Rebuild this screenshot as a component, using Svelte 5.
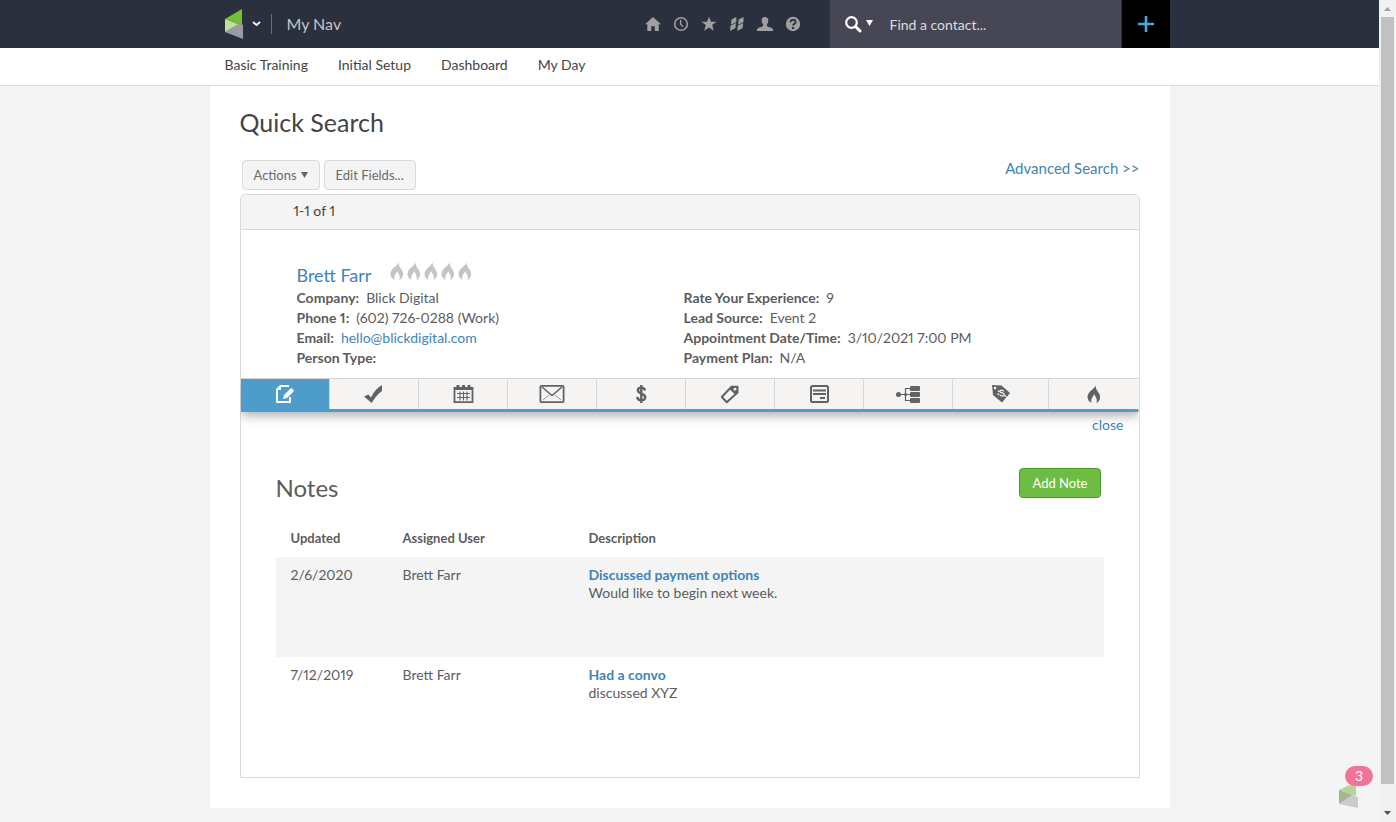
<script lang="ts">
  type Field = { label: string; value: string; href?: string };

  const links = ["Basic Training", "Initial Setup", "Dashboard", "My Day"];
  const quickIcons = ["home", "recent", "favorites", "campaigns", "users", "help"];

  const leftFields: Field[] = [
    { label: "Company:", value: "Blick Digital" },
    { label: "Phone 1:", value: "(602) 726-0288 (Work)" },
    { label: "Email:", value: "hello@blickdigital.com", href: "#email" },
    { label: "Person Type:", value: "" },
  ];

  const rightFields: Field[] = [
    { label: "Rate Your Experience:", value: "9" },
    { label: "Lead Source:", value: "Event 2" },
    { label: "Appointment Date/Time:", value: "3/10/2021 7:00 PM" },
    { label: "Payment Plan:", value: "N/A" },
  ];

  const tabs = [
    "notes", "tasks", "appointments", "email", "orders",
    "tags", "forms", "sequences", "pricing", "score",
  ];

  const notes = [
    { updated: "2/6/2020", user: "Brett Farr", title: "Discussed payment options", body: "Would like to begin next week." },
    { updated: "7/12/2019", user: "Brett Farr", title: "Had a convo", body: "discussed XYZ" },
  ];

  let activeTab = $state("notes");
  let query = $state("");
</script>

{#snippet flame()}
  <path d="M8.600 0C8 4 .8 6.200.5 11.600c-.1 3 1.500 5.200 4 6.400-1-3.700 1-6 3-8.800.8 2.800 3.400 4.600 1.900 8.800 2.400-1.200 3.800-3.400 3.700-6.300C13 7.500 8.200 5.500 8.600 0z" />
{/snippet}

{#snippet quickIcon(name: string)}
  <svg width="16" height="16" viewBox="0 0 16 16" fill="#a0a0a0" aria-hidden="true">
    {#if name === "home"}
      <path d="M8 1l8 7.300h-2.200V15H9.800v-4.800H6.300V15H2.300V8.300H0z" />
    {:else if name === "recent"}
      <circle cx="8" cy="8" r="6.300" fill="none" stroke="#a0a0a0" stroke-width="1.600" />
      <path d="M7.600 4v4.300l2.600 2.500" fill="none" stroke="#a0a0a0" stroke-width="1.400" />
    {:else if name === "favorites"}
      <path d="M8 .7l2 5h5.500l-4.300 3.400 1.600 5.700L8 11.500l-4.800 3.300 1.600-5.700L.5 5.700H6z" />
    {:else if name === "campaigns"}
      <path d="M2.500 3.500L7.300 1v5L2 8.800zM9.700 3.500L14.500 1v5L9.200 8.800zM1.600 9.800L6.900 7l-.5 5L1.100 15zM8.800 9.800L14.100 7l-.5 5-5.300 3z" />
    {:else if name === "users"}
      <path d="M8 1c2 0 3.300 1.300 3.300 3.400 0 1.800-.7 3-1.500 4v1.300c.6 1.300 4.800 1.600 6.200 3.300V15H0v-2c1.400-1.700 5.600-2 6.200-3.300V8.400c-.8-1-1.500-2.200-1.500-4C4.700 2.300 6 1 8 1z" />
    {:else}
      <circle cx="8" cy="8" r="7.200" />
      <path d="M5.400 6.200C5.500 3 10.600 3 10.600 6c0 1.700-2.500 1.700-2.500 3.600" fill="none" stroke="#2b303f" stroke-width="1.800" />
      <circle cx="8.100" cy="11.900" r="1.200" fill="#2b303f" />
    {/if}
  </svg>
{/snippet}

{#snippet tabIcon(name: string)}
  <svg width="26" height="20" viewBox="0 0 26 20" fill="#626262" aria-hidden="true">
    {#if name === "notes"}
      <path d="M17 2H8.500L5 5.500V18h13v-5" fill="none" stroke="#fff" stroke-width="2" />
      <path d="M4 6l5-5v5zM11 15l1-4 7.500-7.500 3 3L15 14z" fill="#fff" />
      <path d="M18 2.500l4.500 4.500" stroke="#4d9cc9" stroke-width=".8" />
    {:else if name === "tasks"}
      <path d="M3 12.600l4.500-2 2.500 3C12.500 8 16.500 3.400 21 1v6c-3.800 2.500-7.300 6.500-10.300 12z" />
    {:else if name === "appointments"}
      <path d="M4.500 4h18v14.200h-18z" fill="none" stroke="#626262" stroke-width="1.800" />
      <path d="M6.500 1h3v4h-3zM12 1h3v4h-3zM17.500 1h3v4h-3zM4 3h19v3H4z" />
      <path d="M7 9.500h13M7 13.500h13M10 7.500v9M13.500 7.500v9M17 7.500v9" stroke="#626262" stroke-width="1.100" />
    {:else if name === "email"}
      <rect x="1.400" y="1.900" width="23.200" height="16.200" rx="1" fill="none" stroke="#626262" stroke-width="1.800" />
      <path d="M3 3l10 8.500L23 3" fill="none" stroke="#626262" stroke-width="1.500" />
      <path d="M4 16l6-5M22 16l-6-5" stroke="#999" stroke-width="1" />
    {:else if name === "orders"}
      <path d="M17 6.500C16.500 2.800 9.800 2.600 9.800 6.300c0 4 7.500 2.600 7.500 7 0 4-7.600 4-8.100-.3M13.300 1v18" fill="none" stroke="#626262" stroke-width="2.400" />
    {:else if name === "tags"}
      <path d="M14.500 2.800L4.800 13l5 5.200L20.500 8.500V2.800z" fill="none" stroke="#626262" stroke-width="2" stroke-linejoin="round" />
      <path d="M14.500 2H21v7l-3 1.500-5-5z" />
      <circle cx="18" cy="5.200" r="1.400" fill="#f5f4f3" />
    {:else if name === "forms"}
      <rect x="5" y="2" width="17" height="16" rx="1.500" fill="none" stroke="#626262" stroke-width="2" />
      <path d="M7 6.500h13M7 10h13" stroke="#626262" stroke-width="1.800" />
      <path d="M14 14h5" stroke="#626262" stroke-width="2" />
    {:else if name === "sequences"}
      <circle cx="3.500" cy="10.500" r="2.500" />
      <circle cx="10.500" cy="10.500" r="1.500" />
      <path d="M3 10.500h13M16 4.500h-5.500v12H16" fill="none" stroke="#626262" stroke-width="1.200" />
      <rect x="15" y="2" width="10" height="5" rx="1" />
      <rect x="15" y="8" width="10" height="5" rx="1" />
      <rect x="15" y="14" width="10" height="5" rx="1" />
    {:else if name === "pricing"}
      <path d="M4 1l9.500.5L22 9l-8 9.500L5 11z" />
      <path d="M15.700 7.500c-1.300-2.200-4.300-1.200-3.500.5.700 1.400 3.300.4 3.900 2 .6 1.900-2.300 3-4 .9M10 6.500l1.500 1.300M16.600 11.400l1.600 1.400M9.500 9.500l1.700 1.500" fill="none" stroke="#f5f4f3" stroke-width="1.300" />
      <circle cx="7" cy="4" r="1.300" fill="#f5f4f3" />
    {:else}
      <g transform="translate(6 1)">{@render flame()}</g>
    {/if}
  </svg>
{/snippet}

{#snippet fieldList(fields: Field[])}
  <dl class="fields">
    {#each fields as field (field.label)}
      <div class="field">
        <dt>{field.label}</dt>
        <dd>
          {#if field.href}<a href={field.href}>{field.value}</a>{:else}{field.value}{/if}
        </dd>
      </div>
    {/each}
  </dl>
{/snippet}

<div class="window">
  <div class="page">
    <header class="topbar">
      <div class="wrap topbar-inner">
        <button type="button" class="brand" aria-label="Switch menu">
          <svg width="18" height="30" viewBox="0 0 18 30" aria-hidden="true">
            <path d="M0 10L17 0v16L0 10z" fill="#78be35" />
            <path d="M0 10l14 5.200L0 23z" fill="#c1e0a0" />
            <path d="M0 23l14-8.500 4 1.200V30z" fill="#9a9ba3" />
          </svg>
          <svg width="9" height="6" viewBox="0 0 9 6" aria-hidden="true">
            <path d="M1 1l3.500 3L8 1" fill="none" stroke="#fff" stroke-width="1.800" />
          </svg>
        </button>
        <span class="nav-title">My Nav</span>

        <nav class="quick" aria-label="Shortcuts">
          {#each quickIcons as name (name)}
            <a href={`#${name}`} aria-label={name}>{@render quickIcon(name)}</a>
          {/each}
        </nav>

        <div class="search">
          <button type="button" class="search-type" aria-label="Search type">
            <svg width="28" height="17" viewBox="0 0 28 17" aria-hidden="true">
              <circle cx="6.500" cy="6.500" r="5.300" fill="none" stroke="#fff" stroke-width="2.200" />
              <path d="M10.500 10.500l4.500 4.500" stroke="#fff" stroke-width="3" stroke-linecap="round" />
              <path d="M21 4h7l-3.500 6z" fill="#fff" />
            </svg>
          </button>
          <input type="text" aria-label="Find a contact" placeholder="Find a contact..." bind:value={query} />
        </div>
        <button type="button" class="add" aria-label="Add">
          <svg width="16" height="16" viewBox="0 0 16 16" aria-hidden="true">
            <path d="M0 8h16M8 0v16" stroke="#4ca7e0" stroke-width="2.600" />
          </svg>
        </button>
      </div>
    </header>

    <nav class="subnav" aria-label="My Nav">
      <div class="wrap subnav-inner">
        {#each links as link (link)}
          <a href="#nav">{link}</a>
        {/each}
      </div>
    </nav>

    <main class="wrap content">
      <h1>Quick Search</h1>

      <div class="toolbar">
        <button type="button" class="btn">
          Actions
          <svg width="7" height="6" viewBox="0 0 7 6" aria-hidden="true"><path d="M0 0h7L3.500 6z" fill="#666" /></svg>
        </button>
        <button type="button" class="btn">Edit Fields...</button>
        <a class="advanced" href="#advanced">Advanced Search &gt;&gt;</a>
      </div>

      <section class="panel">
        <div class="panel-head">1-1 of 1</div>

        <div class="contact">
          <div class="contact-head">
            <a class="name" href="#contact">Brett Farr</a>
            <div class="flames" role="img" aria-label="Score 0 of 5">
              {#each Array(5) as _, i (i)}
                <svg width="14" height="18" viewBox="0 0 14 18" fill="#c4c4c4" aria-hidden="true">{@render flame()}</svg>
              {/each}
            </div>
          </div>
          <div class="columns">
            {@render fieldList(leftFields)}
            {@render fieldList(rightFields)}
          </div>
        </div>

        <div class="tabs" role="tablist">
          {#each tabs as tab (tab)}
            <button
              type="button"
              class="tab"
              class:active={tab === activeTab}
              role="tab"
              aria-label={tab}
              aria-selected={tab === activeTab}
              onclick={() => (activeTab = tab)}
            >
              {@render tabIcon(tab)}
            </button>
          {/each}
        </div>

        <div class="drawer">
          <a class="close" href="#close">close</a>

          <div class="notes-head">
            <h2>Notes</h2>
            <button type="button" class="btn-green">Add Note</button>
          </div>

          <table>
            <thead>
              <tr>
                <th class="col-date">Updated</th>
                <th class="col-user">Assigned User</th>
                <th>Description</th>
              </tr>
            </thead>
            <tbody>
              {#each notes as note (note.updated)}
                <tr>
                  <td>{note.updated}</td>
                  <td>{note.user}</td>
                  <td>
                    <a class="note-title" href="#note">{note.title}</a>
                    <div>{note.body}</div>
                  </td>
                </tr>
              {/each}
            </tbody>
          </table>
        </div>
      </section>
    </main>

    <button type="button" class="helper" aria-label="3 notifications">
      <svg width="20" height="26" viewBox="0 0 20 26" aria-hidden="true">
        <path d="M0 8L17 0v14L0 8z" fill="#b5d594" />
        <path d="M0 8l14 5L0 22z" fill="#a3b58f" />
        <path d="M0 22l13-9 6 2v11z" fill="#cbcbcb" />
      </svg>
      <span class="badge">3</span>
    </button>
  </div>

  <div class="scrollbar" aria-hidden="true">
    <svg width="17" height="17" viewBox="0 0 17 17"><path d="M5 11h7L8.500 7z" fill="#a3a3a3" /></svg>
    <div class="thumb"></div>
    <svg width="17" height="17" viewBox="0 0 17 17"><path d="M5 6h7L8.500 10z" fill="#505050" /></svg>
  </div>
</div>

<style>
  :global(body) {
    margin: 0;
    background: #f4f4f4;
    font-family: Lato, "Open Sans", sans-serif;
    font-size: 14px;
    font-variant-numeric: proportional-nums;
    color: #5c5c5c;
  }

  a {
    color: #3f84b8;
    text-decoration: none;
  }

  button {
    font: inherit;
    cursor: pointer;
  }

  svg {
    display: block;
  }

  .window {
    display: grid;
    grid-template-columns: 1fr 17px;
    height: 100vh;
  }

  .page {
    position: relative;
    overflow: hidden;
  }

  .wrap {
    box-sizing: border-box;
    max-width: 960px;
    margin: 0 auto;
  }

  .topbar {
    background: #2b303f;
  }

  .topbar-inner {
    display: flex;
    align-items: center;
    height: 48px;
    padding-left: 15px;
  }

  .brand {
    display: flex;
    align-items: center;
    gap: 9px;
    padding: 0;
    border: 0;
    background: none;
  }

  .nav-title {
    margin-left: 10px;
    padding-left: 15px;
    border-left: 1px solid #6b6e78;
    font-size: 16px;
    line-height: 20px;
    color: #c4c5c9;
  }

  .quick {
    display: flex;
    gap: 12px;
    margin-left: auto;
    margin-right: 29px;
  }

  .search {
    display: flex;
    align-items: center;
    align-self: stretch;
    gap: 17px;
    box-sizing: border-box;
    width: 291px;
    margin-right: 1px;
    padding-left: 15px;
    background: #464655;
  }

  .search-type {
    padding: 0;
    border: 0;
    background: none;
  }

  .search input {
    flex: 1;
    min-width: 0;
    padding: 2px 0 0;
    border: 0;
    outline: 0;
    background: none;
    font: inherit;
    line-height: 20px;
    color: #fff;
  }

  .search input::placeholder {
    color: #dcdce0;
    opacity: 1;
  }

  .add {
    display: grid;
    place-items: center;
    align-self: stretch;
    width: 48px;
    padding: 0;
    border: 0;
    background: #000;
  }

  .subnav {
    border-bottom: 1px solid #dcdcdc;
    background: #fff;
  }

  .subnav-inner {
    display: flex;
    gap: 30px;
    padding: 7px 15px 10px;
    line-height: 20px;
  }

  .subnav a {
    color: #444;
  }

  .content {
    padding: 20px 30px 30px;
    background: #fff;
  }

  h1,
  h2 {
    margin: 0;
    font-weight: 400;
    line-height: 32px;
  }

  h1 {
    font-size: 25px;
    color: #444;
  }

  h2 {
    font-size: 24px;
  }

  .toolbar {
    display: flex;
    gap: 4px;
    margin-top: 22px;
    padding-left: 2px;
  }

  .btn {
    display: flex;
    align-items: center;
    gap: 4px;
    height: 30px;
    padding: 0 11px;
    border: 1px solid #dadada;
    border-radius: 4px;
    background: #f4f4f4;
    font-size: 13px;
    color: #6a6a6a;
  }

  .advanced {
    margin-left: auto;
    font-size: 15px;
    line-height: 16px;
  }

  .panel {
    margin-top: 4px;
    border: 1px solid #dadada;
    border-radius: 5px 5px 0 0;
  }

  .panel-head {
    padding: 0 53px 2px;
    border-bottom: 1px solid #dadada;
    border-radius: 4px 4px 0 0;
    background: #f4f4f4;
    line-height: 32px;
    color: #444;
  }

  .contact {
    padding: 32px 56px 10px;
  }

  .contact-head {
    display: flex;
    gap: 19px;
    line-height: 26px;
  }

  .name {
    font-size: 18px;
  }

  .flames {
    display: flex;
    gap: 3px;
  }

  .columns {
    display: grid;
    grid-template-columns: 387fr 399fr;
  }

  .fields {
    margin: 0;
    line-height: 20px;
  }

  .field {
    display: flex;
    gap: 7px;
  }

  dt {
    font-weight: 700;
  }

  dd {
    margin: 0;
  }

  .tabs {
    display: grid;
    grid-template-columns: repeat(8, 89fr) 96fr 89fr;
    border-top: 1px solid #d6d6d6;
    border-bottom: 3px solid #4d9cc9;
    box-shadow: 0 4px 10px rgba(0, 0, 0, 0.3);
    clip-path: inset(0 0 -16px 0);
  }

  .tab {
    display: grid;
    place-items: center;
    height: 30px;
    padding: 0;
    border: 0;
    border-right: 1px solid #d6d6d6;
    background: #f5f4f3;
  }

  .tab:last-child {
    border-right: 0;
  }

  .tab.active {
    background: #4d9cc9;
  }

  .drawer {
    padding: 3px 35px 20px;
  }

  .close {
    display: block;
    margin-right: -20px;
    text-align: right;
    line-height: 20px;
  }

  .notes-head {
    display: flex;
    justify-content: space-between;
    margin-top: 33px;
    padding-right: 3px;
  }

  .notes-head h2 {
    padding-top: 4px;
  }

  .btn-green {
    height: 30px;
    padding: 0 12px;
    border: 1px solid #4c9a26;
    border-radius: 4px;
    background: #6dbd45;
    font-size: 13px;
    color: #fff;
  }

  table {
    width: 100%;
    margin-top: 15px;
    border-collapse: collapse;
    table-layout: fixed;
  }

  th,
  td {
    padding: 0 0 0 15px;
    text-align: left;
  }

  th {
    height: 38px;
    font-size: 13px;
  }

  .col-date {
    width: 97px;
  }

  .col-user {
    width: 171px;
  }

  td {
    box-sizing: border-box;
    height: 100px;
    padding-top: 9px;
    line-height: 18px;
    vertical-align: top;
  }

  tbody tr:nth-child(odd) {
    background: #f4f4f4;
  }

  .note-title {
    font-weight: 700;
  }

  .helper {
    position: absolute;
    right: 20px;
    bottom: 14px;
    padding: 0;
    border: 0;
    background: none;
  }

  .badge {
    position: absolute;
    left: 6px;
    top: -16px;
    width: 28px;
    border-radius: 10px;
    background: #f27398;
    line-height: 20px;
    text-align: center;
    color: #fff;
  }

  .scrollbar {
    display: flex;
    flex-direction: column;
    background: #f1f1f1;
  }

  .thumb {
    flex: 1;
    margin: 0 2px 21px;
    background: #c1c1c1;
  }
</style>
